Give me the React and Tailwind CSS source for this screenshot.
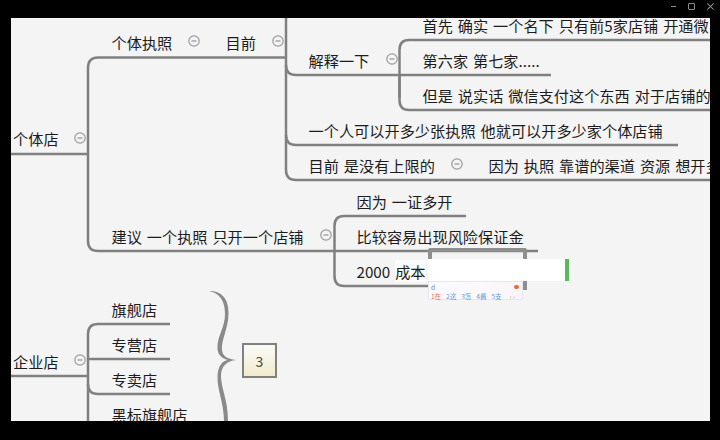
import React from 'react';

// text nodes of the map, in canvas coordinates
const nodes = [
  { x: 2, y: 110, text: '个体店' },
  { x: 100.5, y: 14, text: '个体执照' },
  { x: 214.5, y: 14, text: '目前' },
  { x: 297.5, y: 32, text: '解释一下' },
  { x: 411.5, y: -3, text: '首先 确实 一个名下 只有前5家店铺 开通微' },
  { x: 411.5, y: 32, text: '第六家 第七家.....' },
  { x: 411.5, y: 67, text: '但是 说实话 微信支付这个东西 对于店铺的' },
  { x: 297.5, y: 102, text: '一个人可以开多少张执照 他就可以开多少家个体店铺' },
  { x: 297.5, y: 137, text: '目前 是没有上限的' },
  { x: 477.5, y: 137, text: '因为 执照 靠谱的渠道 资源 想开多' },
  { x: 345.5, y: 173, text: '因为 一证多开' },
  { x: 345.5, y: 208, text: '比较容易出现风险保证金' },
  { x: 100.5, y: 208, text: '建议 一个执照 只开一个店铺' },
  { x: 2, y: 333, text: '企业店' },
  { x: 100.5, y: 281, text: '旗舰店' },
  { x: 100.5, y: 316, text: '专营店' },
  { x: 100.5, y: 351, text: '专卖店' },
  { x: 100.5, y: 386, text: '黑标旗舰店' },
];

const collapse = [
  [183, 23], [266.5, 23], [69, 120], [380.5, 41], [446, 146], [315, 217], [69, 342],
];

const lines = [
  'M0 136 H77',
  'M77 223 V50 Q77 39.5 87 39.5 H275',
  'M275 0 V152 Q275 162 285 162 H699',
  'M275 47 Q275 57 285 57 H540',
  'M275 117 Q275 127 285 127 H667',
  'M388.5 80 V32 Q388.5 22 398 22 H699',
  'M388.5 57 V82 Q388.5 92 398 92 H699',
  'M77 223 Q77 233 87 233 H527',
  'M323.5 258 V208 Q323.5 198 333 198 H455',
  'M323.5 258 Q323.5 268 333 268 H420',
  'M77 403 V316 Q77 306 87 306 H159',
  'M77 341 H159',
  'M77 366 Q77 376 87 376 H159',
  'M0 358 H77',
];

function Collapse({ x, y }) {
  return (
    <svg className="absolute" style={{ left: x - 6, top: y - 6 }} width="12" height="12" viewBox="0 0 12 12">
      <circle cx="6" cy="6" r="5.2" fill="#f4f4f4" stroke="#9a9a9a" strokeWidth="1.2" />
      <path d="M3.5 6 H8.5" stroke="#8f8fa8" strokeWidth="1.2" />
    </svg>
  );
}

export default function App() {
  return (
    <div className="w-[720px] h-[440px] bg-black overflow-hidden flex flex-col font-['Noto_Sans_CJK_SC','Noto_Sans',sans-serif]">
      <div className="h-[18px] flex items-center justify-end gap-[12px] pr-[6px] pb-[6px] shrink-0">
        <div className="w-[5px] h-px bg-[#8a8a8a]" />
        <div className="w-[7px] h-[7px] border border-[#8a8a8a] rounded-[1px]" />
        <div className="relative w-[7px] h-[7px]">
          <div className="absolute left-[3px] top-[-1px] w-px h-[9px] bg-[#8a8a8a] rotate-45" />
          <div className="absolute left-[3px] top-[-1px] w-px h-[9px] bg-[#8a8a8a] -rotate-45" />
        </div>
      </div>
      <div className="flex-1 pl-[11px] pr-[10px] pb-[19px]">
        <div className="relative w-[699px] h-[403px] bg-[#f4f4f4] overflow-hidden text-[15.2px] leading-[20px] text-[#1c1c1c] [word-spacing:1.5px]">
          <svg className="absolute left-0 top-0" width="699" height="403" viewBox="0 0 699 403" fill="none">
            {lines.map((d) => (
              <path key={d} d={d} stroke="#808080" strokeWidth="2.5" />
            ))}
            <path
              fill="#8a8a8a"
              d="M198 273 C210 273 218 280 217.5 296 C217 312 210 322 211 332 C211.5 338 216 341 225 342 C216 343 210 348 210 358 C210 370 217 382 217 403 L213 403 C213 385 206 372 206.5 358 C207 348 211 343 217 342 C210 340 206.5 336 206.5 330 C206 318 214 310 214 296 C214 282 208 275 198 273 Z"
            />
          </svg>

          {nodes.map((n) => (
            <div key={n.text} className="absolute whitespace-nowrap" style={{ left: n.x, top: n.y }}>
              {n.text}
            </div>
          ))}

          <div className="absolute left-[345.5px] top-[243px] whitespace-nowrap">
            2000 <span className="bg-[#fbfbfb]">成本</span>
          </div>

          {collapse.map(([x, y]) => (
            <Collapse key={x + '-' + y} x={x} y={y} />
          ))}

          {/* summary box */}
          <div className="absolute left-[231px] top-[325px] w-[35px] h-[35px] border-[2.5px] border-[#808080] bg-gradient-to-b from-[#fbfbf6] to-[#efeccd] flex items-center justify-center text-[14px] text-[#444444]">
            3
          </div>

          {/* node being edited */}
          <div className="absolute left-[417px] top-[230px] w-[99px] h-[42px] border-[4px] border-b-0 border-[#8f8f8f] rounded-t-[3px]" />
          <div className="absolute left-[417px] top-[241px] w-[141px] h-[22px] bg-white border-r-[4px] border-[#5cb85c]" />

          {/* ime popup */}
          <div className="absolute left-[417px] top-[263px] w-[95px] h-[19px] bg-gradient-to-r from-[#fbfbff] to-[#fdf5f8] border border-[#e4e6f2] rounded-b-[2px] text-[6.5px] leading-[8px] px-[2px] pt-[1px] [word-spacing:0]">
            <div className="flex justify-between text-[#5b7fc0]">
              <span>d</span>
              <span className="w-[5px] h-[4px] mt-[2px] mr-[1px] rounded-full bg-[#e2703a]" />
            </div>
            <div className="flex gap-[5px] mt-[1px] text-[#5b9bd5] whitespace-nowrap">
              <span className="text-[#e2705a]">1在</span>
              <span>2这</span>
              <span>3怎</span>
              <span>4酱</span>
              <span>5支</span>
              <span className="ml-[3px] text-[#999999]">‹ ›</span>
            </div>
          </div>
        </div>
      </div>
    </div>
  );
}
